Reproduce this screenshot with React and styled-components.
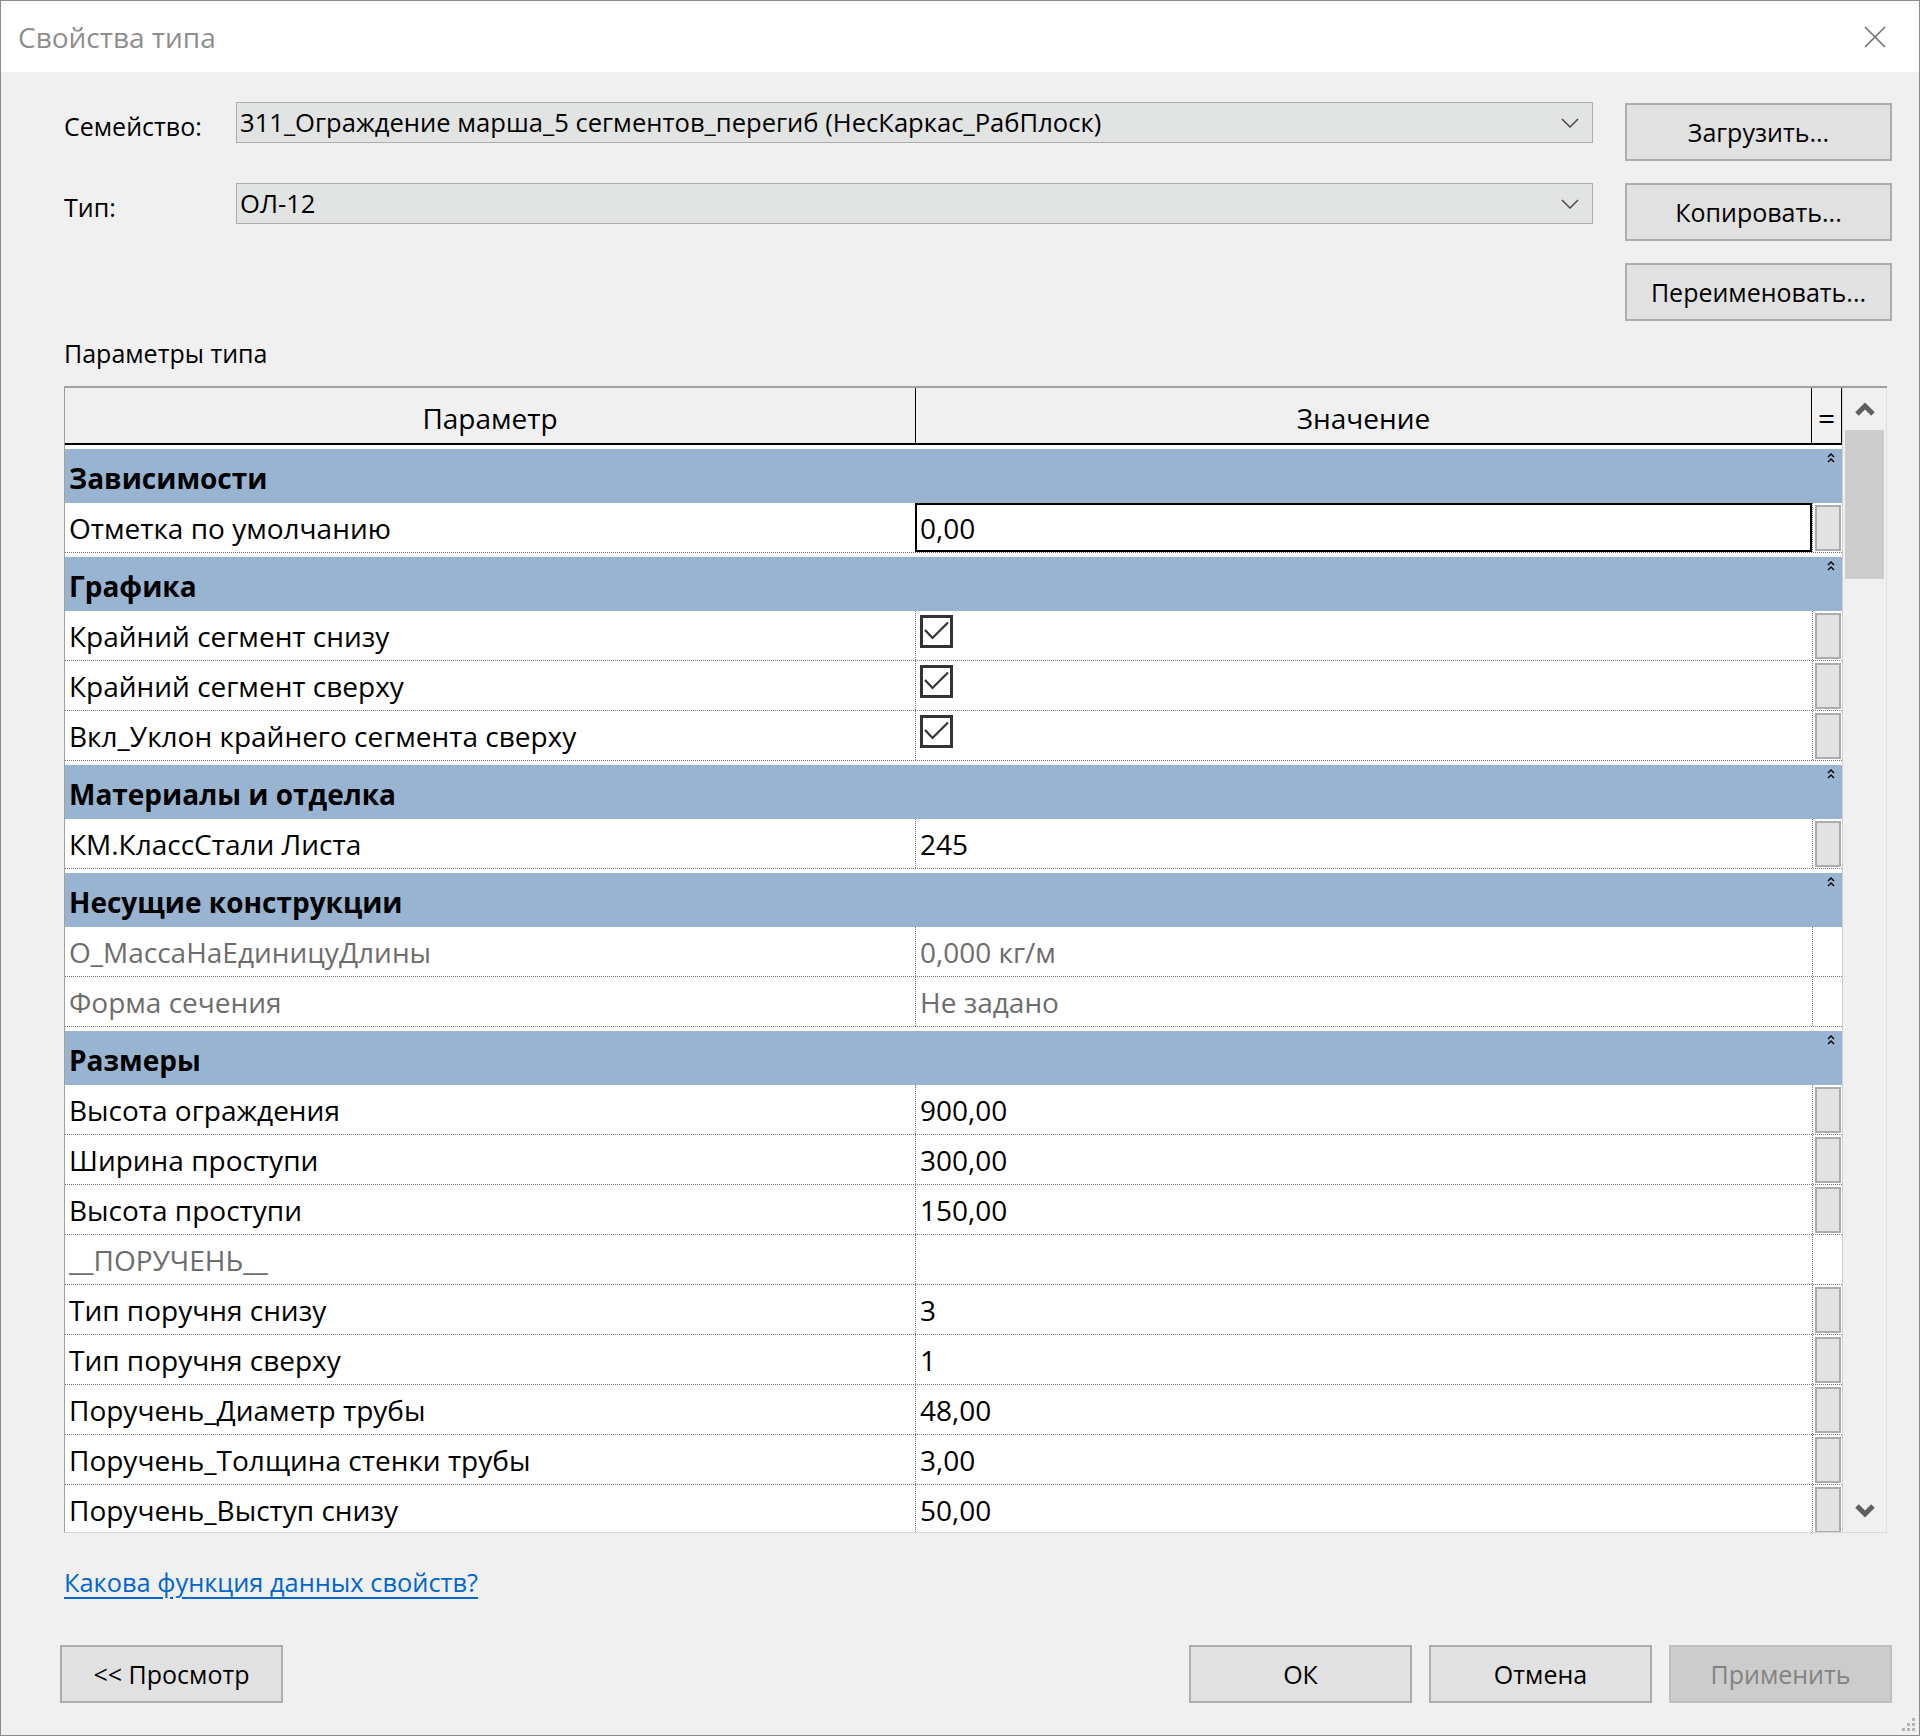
import React from "react";
import styled, { createGlobalStyle } from "styled-components";

const GlobalStyle = createGlobalStyle`
	html, body {
		margin: 0;
		padding: 0;
		background: #f0f0f0;
	}
	body {
		font-family: "Open Sans", "Noto Sans", sans-serif;
		color: #000;
	}
	* {
		box-sizing: border-box;
	}
`;

const groups = [
	{
		title: "Зависимости",
		rows: [{ name: "Отметка по умолчанию", value: "0,00", editing: true, button: true }],
	},
	{
		title: "Графика",
		rows: [
			{ name: "Крайний сегмент снизу", check: true, button: true },
			{ name: "Крайний сегмент сверху", check: true, button: true },
			{ name: "Вкл_Уклон крайнего сегмента сверху", check: true, button: true },
		],
	},
	{
		title: "Материалы и отделка",
		rows: [{ name: "КМ.КлассСтали Листа", value: "245", button: true }],
	},
	{
		title: "Несущие конструкции",
		rows: [
			{ name: "О_МассаНаЕдиницуДлины", value: "0,000 кг/м", readOnly: true },
			{ name: "Форма сечения", value: "Не задано", readOnly: true },
		],
	},
	{
		title: "Размеры",
		rows: [
			{ name: "Высота ограждения", value: "900,00", button: true },
			{ name: "Ширина проступи", value: "300,00", button: true },
			{ name: "Высота проступи", value: "150,00", button: true },
			{ name: "__ПОРУЧЕНЬ__", value: "", readOnly: true },
			{ name: "Тип поручня снизу", value: "3", button: true },
			{ name: "Тип поручня сверху", value: "1", button: true },
			{ name: "Поручень_Диаметр трубы", value: "48,00", button: true },
			{ name: "Поручень_Толщина стенки трубы", value: "3,00", button: true },
			{ name: "Поручень_Выступ снизу", value: "50,00", button: true },
		],
	},
];

function Chevron({ down }) {
	return (
		<svg width="20" height="16" viewBox="0 0 20 16">
			<polyline
				points={down ? "2,3 10,11 18,3" : "2,13 10,5 18,13"}
				fill="none"
				stroke="#606060"
				strokeWidth="5"
				strokeLinejoin="miter"
			/>
		</svg>
	);
}

function ComboArrow() {
	return (
		<svg width="18" height="10" viewBox="0 0 18 10">
			<polyline points="1,1 9,9 17,1" fill="none" stroke="#4a4a4a" strokeWidth="1.5" />
		</svg>
	);
}

function Collapse() {
	return (
		<svg width="8" height="10" viewBox="0 0 8 10">
			<polyline points="1,4 4,1 7,4" fill="none" stroke="#000" strokeWidth="1.4" />
			<polyline points="1,9 4,6 7,9" fill="none" stroke="#000" strokeWidth="1.4" />
		</svg>
	);
}

function CheckMark() {
	return (
		<svg width="27" height="27" viewBox="0 0 27 27">
			<polyline points="2,12 9.5,20 25,4.5" fill="none" stroke="#333" strokeWidth="2.2" />
		</svg>
	);
}

function App() {
	return (
		<>
			<GlobalStyle />
			<Window>
				<TitleBar>
					<TitleText>Свойства типа</TitleText>
					<CloseIcon width="22" height="22" viewBox="0 0 22 22">
						<line x1="1" y1="1" x2="21" y2="21" stroke="#6e6e6e" strokeWidth="1.6" />
						<line x1="21" y1="1" x2="1" y2="21" stroke="#6e6e6e" strokeWidth="1.6" />
					</CloseIcon>
				</TitleBar>
				<Body>
					<TopSection>
						<Fields>
							<FieldRow>
								<FieldLabel>Семейство:</FieldLabel>
								<Combo>
									<span>311_Ограждение марша_5 сегментов_перегиб (НесКаркас_РабПлоск)</span>
									<ComboArrow />
								</Combo>
							</FieldRow>
							<FieldRow>
								<FieldLabel>Тип:</FieldLabel>
								<Combo>
									<span>ОЛ-12</span>
									<ComboArrow />
								</Combo>
							</FieldRow>
						</Fields>
						<ButtonStack>
							<DialogButton $width={267}>Загрузить...</DialogButton>
							<DialogButton $width={267}>Копировать...</DialogButton>
							<DialogButton $width={267}>Переименовать...</DialogButton>
						</ButtonStack>
					</TopSection>

					<SectionLabel>Параметры типа</SectionLabel>

					<GridFrame>
						<Table>
							<HeaderRow>
								<HeaderCell>Параметр</HeaderCell>
								<HeaderCell>Значение</HeaderCell>
								<HeaderCell $narrow>=</HeaderCell>
							</HeaderRow>
							<TableBody>
								{groups.map((g) => (
									<React.Fragment key={g.title}>
										<CategoryRow>
											<span>{g.title}</span>
											<CategoryToggle>
												<Collapse />
											</CategoryToggle>
										</CategoryRow>
										{g.rows.map((r) => (
											<DataRow key={r.name}>
												<NameCell $readOnly={r.readOnly}>{r.name}</NameCell>
												<ValueCell $readOnly={r.readOnly} $editing={r.editing}>
													{r.check ? (
														<CheckBox>
															<CheckMark />
														</CheckBox>
													) : (
														r.value
													)}
												</ValueCell>
												<ButtonCell>{r.button && <CellButton />}</ButtonCell>
											</DataRow>
										))}
									</React.Fragment>
								))}
							</TableBody>
						</Table>
						<ScrollBar>
							<ScrollArrow>
								<Chevron />
							</ScrollArrow>
							<ScrollTrack>
								<ScrollThumb />
							</ScrollTrack>
							<ScrollArrow>
								<Chevron down />
							</ScrollArrow>
						</ScrollBar>
					</GridFrame>

					<HelpLink href="#">Какова функция данных свойств?</HelpLink>

					<Footer>
						<DialogButton $width={223}>&lt;&lt; Просмотр</DialogButton>
						<FooterRight>
							<DialogButton $width={223}>ОК</DialogButton>
							<DialogButton $width={223}>Отмена</DialogButton>
							<DialogButton $width={223} $disabled>
								Применить
							</DialogButton>
						</FooterRight>
					</Footer>
					<Grip width="14" height="14" viewBox="0 0 14 14">
						<rect x="10" y="0" width="3" height="3" fill="#b5b5b5" />
						<rect x="5" y="5" width="3" height="3" fill="#b5b5b5" />
						<rect x="10" y="5" width="3" height="3" fill="#b5b5b5" />
						<rect x="0" y="10" width="3" height="3" fill="#b5b5b5" />
						<rect x="5" y="10" width="3" height="3" fill="#b5b5b5" />
						<rect x="10" y="10" width="3" height="3" fill="#b5b5b5" />
					</Grip>
				</Body>
			</Window>
		</>
	);
}

export default App;

const Window = styled.div`
	width: 1920px;
	height: 1736px;
	display: flex;
	flex-direction: column;
	border: 1px solid #8c8c8c;
	background: #f0f0f0;
	overflow: hidden;
`;

const TitleBar = styled.div`
	height: 71px;
	background: #ffffff;
	display: flex;
	align-items: center;
	justify-content: space-between;
	padding: 0 33px 0 17px;
	flex-shrink: 0;
`;

const TitleText = styled.div`
	font-size: 28px;
	color: #8e8e8e;
`;

const CloseIcon = styled.svg`
	display: block;
`;

const Body = styled.div`
	position: relative;
	flex: 1;
	display: flex;
	flex-direction: column;
	padding: 30px 27px 0 63px;
	font-size: 25px;
`;

const TopSection = styled.div`
	display: flex;
	justify-content: space-between;
	align-items: flex-start;
`;

const Fields = styled.div`
	display: flex;
	flex-direction: column;
	gap: 40px;
`;

const FieldRow = styled.div`
	display: flex;
	align-items: center;
	height: 41px;
`;

const FieldLabel = styled.div`
	width: 172px;
	padding-top: 6px;
`;

const Combo = styled.div`
	width: 1357px;
	height: 41px;
	background: #e2e3e3;
	border: 1px solid #adadad;
	display: flex;
	align-items: center;
	justify-content: space-between;
	padding: 0 13px 0 3px;
	white-space: nowrap;
	font-size: 25.6px;
`;

const ButtonStack = styled.div`
	display: flex;
	flex-direction: column;
	gap: 22px;
	margin-top: 1px;
`;

const DialogButton = styled.div`
	width: ${(p) => p.$width}px;
	height: 58px;
	display: flex;
	align-items: center;
	justify-content: center;
	background: ${(p) => (p.$disabled ? "#cccccc" : "#e1e1e1")};
	border: 2px solid ${(p) => (p.$disabled ? "#bfbfbf" : "#adadad")};
	color: ${(p) => (p.$disabled ? "#838383" : "#000")};
	font-size: 25px;
`;

const SectionLabel = styled.div`
	margin-top: 14px;
	height: 36px;
	line-height: 36px;
`;

const GridFrame = styled.div`
	margin-top: 15px;
	width: 1823px;
	height: 1147px;
	display: flex;
	border-top: 2px solid #a0a0a0;
	border-left: 1px solid #a0a0a0;
	border-bottom: 1px solid #d8d8d8;
	background: #ffffff;
`;

const Table = styled.div`
	width: 1778px;
	height: 100%;
	display: flex;
	flex-direction: column;
	overflow: hidden;
	background: #ffffff;
	border-right: 1px solid #d0d0d0;
	font-size: 28px;
`;

const HeaderRow = styled.div`
	display: grid;
	grid-template-columns: 851px 896px 30px;
	height: 57px;
	flex-shrink: 0;
	background: #f0f0f0;
	border-bottom: 2px solid #000;
`;

const HeaderCell = styled.div`
	display: flex;
	align-items: center;
	justify-content: center;
	padding-top: 4px;
	border-right: 1px solid #000;
	font-size: ${(p) => (p.$narrow ? "30px" : "28px")};
`;

const TableBody = styled.div`
	display: flex;
	flex-direction: column;
`;

const CategoryRow = styled.div`
	position: relative;
	margin-top: 4px;
	height: 54px;
	flex-shrink: 0;
	background: #99b4d1;
	display: flex;
	align-items: center;
	padding: 3px 0 0 4px;
	font-weight: 700;
	font-size: 28px;
`;

const CategoryToggle = styled.div`
	position: absolute;
	right: 7px;
	top: 3px;
	line-height: 0;
`;

const DataRow = styled.div`
	display: grid;
	grid-template-columns: 851px 896px 30px;
	height: 50px;
	flex-shrink: 0;
	border-bottom: 1px dotted #7a7a7a;
`;

const NameCell = styled.div`
	display: flex;
	align-items: center;
	padding: 0 0 0 4px;
	border-right: 1px dotted #7a7a7a;
	color: ${(p) => (p.$readOnly ? "#6d6d6d" : "#000")};
	white-space: nowrap;
`;

const ValueCell = styled.div`
	display: flex;
	align-items: center;
	padding: 0 0 0 4px;
	color: ${(p) => (p.$readOnly ? "#6d6d6d" : "#000")};
	border: ${(p) => (p.$editing ? "2px solid #000" : "none")};
	margin-left: ${(p) => (p.$editing ? "-1px" : "0")};
	padding-left: ${(p) => (p.$editing ? "3px" : "4px")};
	white-space: nowrap;
`;

const CheckBox = styled.div`
	width: 33px;
	height: 33px;
	border: 3px solid #333;
	margin-top: -8px;
	background: #fff;
	display: flex;
	align-items: center;
	justify-content: center;
`;

const ButtonCell = styled.div`
	border-left: 1px dotted #7a7a7a;
	padding: 2px 1px 1px 2px;
	display: flex;
`;

const CellButton = styled.div`
	flex: 1;
	background: #e1e2e2;
	border: 2px solid #acacac;
`;

const ScrollBar = styled.div`
	width: 44px;
	height: 100%;
	display: flex;
	flex-direction: column;
	background: #f0f0f0;
	border-right: 1px solid #e0e0e0;
`;

const ScrollArrow = styled.div`
	height: 42px;
	display: flex;
	align-items: center;
	justify-content: center;
	flex-shrink: 0;
`;

const ScrollTrack = styled.div`
	flex: 1;
	padding: 0 2px;
`;

const ScrollThumb = styled.div`
	height: 149px;
	background: #cdcdcd;
`;

const HelpLink = styled.a`
	margin-top: 31px;
	align-self: flex-start;
	height: 36px;
	line-height: 36px;
	color: #0066cc;
	text-decoration: underline;
	text-underline-offset: 5px;
	font-size: 25.4px;
`;

const Footer = styled.div`
	margin-top: 45px;
	margin-left: -4px;
	display: flex;
	justify-content: space-between;
`;

const FooterRight = styled.div`
	display: flex;
	gap: 17px;
`;

const Grip = styled.svg`
	position: absolute;
	right: 3px;
	bottom: 3px;
`;
